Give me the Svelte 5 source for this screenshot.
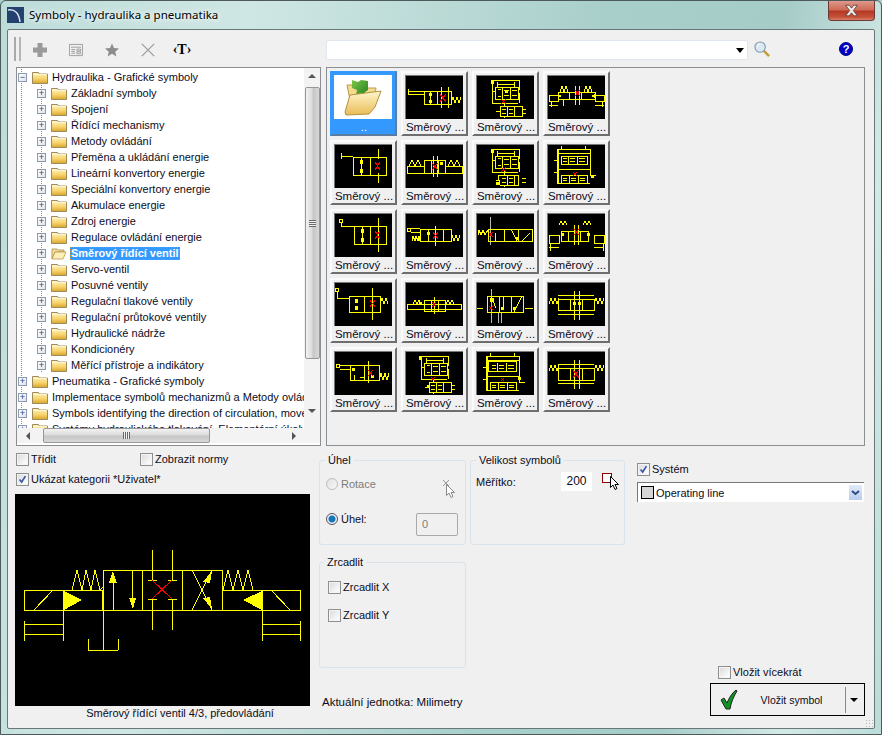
<script>
  const tree = [
    { t: 'Hydraulika - Grafické symboly', l: 0, root: true },
    ...['Základní symboly','Spojení','Řídící mechanismy','Metody ovládání','Přeměna a ukládání energie','Lineární konvertory energie','Speciální konvertory energie','Akumulace energie','Zdroj energie','Regulace ovládání energie'].map((t) => ({ t, l: 1 })),
    { t: 'Směrový řídící ventil', l: 1, sel: true },
    ...['Servo-ventil','Posuvné ventily','Regulační tlakové ventily','Regulační průtokové ventily','Hydraulické nádrže','Kondicionéry','Měřící přístroje a indikátory'].map((t) => ({ t, l: 1 })),
    { t: 'Pneumatika - Grafické symboly', l: 0 },
    { t: 'Implementace symbolů mechanizmů a Metody ovládání', l: 0 },
    { t: 'Symbols identifying the direction of circulation, movement', l: 0 },
    { t: 'Systémy hydraulického tlakování, Elementární úkoly', l: 0 }
  ];

  const block1 = 'M15 5h28M16 5v24M43 5v10M19 12h23v12H19zM26 12v12M34 12v12M16 16h4M16 28h26M43 18v10M21 7v5M38 7v5M22 9h16M24 31h22v10H24zM31 31v10M38 31v10M28 27v4M28 41v2M46 34h4M46 38h4M20 36h4M22 14h3M28 15h5M36 15h5M22 21h3M28 20h5M36 20h5M26 34h4M33 34h4M33 38h4M26 38h4';
  const block2 = 'M10 5h33v4H10zM10 5v34M11 5v34M43 9v22M14 12h26v8H14zM21 12v8M30 12v8M10 25h33M14 31h26v8H14zM22 31v8M31 31v8M10 39h33M43 31h6M7 16h3M7 28h3M16 14h4M23 14h5M32 14h6M16 17h4M23 17h5M32 17h6M16 34h4M24 34h5M33 34h5M16 36h4M24 36h5M33 36h5M14 2v3M38 2v3';
  const thumbs = [
    { y: 'M3 14v5M3 16h16M3 19h16M19 16h27v13H19zM32 16v13M25 16v13M36 12v21M43 12v21M46 28l2-6 2 6 2-6 2 6 2-6', r: 'M35 19l6 8M41 19l-6 8', f: 'M24 18h3v3h-3zM24 25h3v3h-3z' },
    { y: block1, r: 'M25 24l5 5M30 24l-5 5', f: 'M15 5h3v4h-3zM29 15h3v3h-3z' },
    { y: 'M2 20h9v6H2zM48 20h9v6h-9zM11 17h37v7H11zM22 17v7M34 17v7M28 11v19M32 11v19M13 17l2-6 2 6 2-6 2 6M37 17l2-6 2 6 2-6 2 6M16 24v7M4 26v6M55 26v6M2 30h9M48 30h9', r: 'M28 15l5 6M33 15l-5 6', f: 'M11 19l4 2-4 2zM48 19l-4 2 4 2z' },
    { y: 'M7 9v6M7 12h12M19 13h33v18H19zM36 13v18M27 13v18M44 5v10M44 29v10', r: 'M41 18l5 8M46 18l-5 8', f: 'M26 16h3v4h-3zM26 25h3v4h-3z' },
    { y: 'M2 22h17v7H2zM40 22h17v7H40zM19 16h21v13H19zM26 16v13M33 16v13M4 22l3-6 3 6 3-6 3 6M43 22l3-6 3 6 3-6 3 6M28 12v21M32 12v21', r: 'M27 19l6 7M33 19l-6 7', f: 'M35 18h3v3h-3z' },
    { y: block1.replace('M24 31h22', 'M22 31h20'), r: 'M25 23l5 5M30 23l-5 5', f: 'M15 5h3v4h-3zM20 38h3v3h-3z' },
    { y: block2, r: 'M26 28l4 4M30 28l-4 4', f: 'M44 31h3v3h-3z' },
    { y: 'M7 8m-2 0a2 2 0 1 0 4 0a2 2 0 1 0-4 0M7 10v3M7 13h13M20 13h32v18H20zM36 13v18M28 13v18M44 5v34', r: 'M41 18l5 8M46 18l-5 8', f: 'M27 16h3v4h-3zM27 25h3v4h-3z' },
    { y: 'M4 17m-2 0a2 2 0 1 0 4 0a2 2 0 1 0-4 0M6 15h9M6 19h9M15 16h31v12H15zM23 16v12M38 16v12M30 13v20M7 28l1-5 2 5 1-5 2 5 1-5 1 5M46 28l1-6 2 6 2-6 2 6 2-6', r: 'M28 19l5 7M33 19l-5 7', f: 'M22 19h3v3h-3z' },
    { y: 'M2 22l1-5 2 5 2-5 2 5 3-5M12 16h44v12H12zM28 16v12M42 16v12M19 20v8M18 28h4M35 16l6 12M46 28l8-8', r: 'M13 19l4 5M17 19l-4 5', w: 'M14 4v28', f: 'M40 24h3v3h-3z' },
    { y: 'M2 22h10v8H2zM47 22h10v8H47zM14 18h27v10H14zM21 18v10M33 18v10M27 12v20M31 12v20M12 12l2-4 2 4 2-4 2 4M36 12l2-4 2 4 2-4 2 4M3 30v8M56 30v8M2 34h10M47 34h10', r: 'M27 16l5 6M32 16l-5 6', f: 'M14 20h3v3h-3zM40 20h3v3h-3z' },
    { y: 'M3 8m-2 0a2 2 0 1 0 4 0a2 2 0 1 0-4 0M3 10v6M3 16h12M15 14h31v16H15zM30 14v16M38 6v32M46 22l2-6 2 6 2-6 2 6', r: 'M36 18l5 7M41 18l-5 7', f: 'M21 17h3v4h-3zM21 24h3v4h-3z' },
    { y: 'M2 22h54v5H2zM19 18h21v11H19zM26 18v11M33 18v11M29 15v17M8 22l2-4 2 4 2-4 2 4M41 22l2-4 2 4 2-4 2 4', r: 'M27 20l4 5M31 20l-4 5', f: 'M14 20h3v2h-3z' },
    { y: 'M11 14h36v16H11zM23 14v16M35 14v16M1 26h6M49 26h8M15 14l5 12M27 14v12M38 30l8-16', r: 'M13 24l4 4M17 24l-4 4', w: 'M15 7v34M22 30v11M25 30v11', f: 'M14 16h4v4h-4zM25 25h3v3h-3zM37 25h3v3h-3z' },
    { y: 'M2 22l2-6 2 6 2-6 2 6 2-6M47 22l2-6 2 6 2-6 2 6 2-6M11 17h36v11H11zM23 17v11M35 17v11M27 9v29M32 9v29M11 13h36M11 32h36', r: '', f: 'M26 20h3v3h-3zM31 20h3v3h-3z' },
    { y: 'M4 15m-2 0a2 2 0 1 0 4 0a2 2 0 1 0-4 0M6 14h10M6 18h10M16 14h29v15H16zM30 14v15M34 10v22M20 24v5M26 26h5M45 29l2-7 2 7 2-7 2 7 2-7', r: 'M34 19l5 6M39 19l-5 6', f: 'M18 17h3v3h-3zM37 24h3v3h-3z' },
    { y: block1, r: 'M26 26l4 4M30 26l-4 4', f: 'M14 5h3v4h-3zM22 34h3v3h-3z' },
    { y: block2.replace('M14 12h26v8H14z', 'M12 10h28v10H12z'), r: 'M25 27l3 3M28 27l-3 3', f: 'M42 26h3v3h-3z' },
    { y: 'M2 20l2-6 2 6 2-6 2 6 2-6M47 20l2-6 2 6 2-6 2 6 2-6M11 17h36v12H11zM23 17v12M35 17v12M27 9v29M32 9v29M11 13h36M11 32h36', r: 'M26 19l6 8M32 19l-6 8', f: '' }
  ];
  const toolbar = ['plus', 'form', 'star', 'cross'];
</script>

{#snippet folder(open)}
  <svg class="folder" viewBox="0 0 16 13" aria-hidden="true">
    {#if open}
      <path d="M1 12V2h5l1 1h6v2H4z" fill="#f6e2a0" stroke="#a68b44" stroke-width=".8"/>
      <path d="M1 12l3-7h11l-3 7z" fill="#fbeeb8" stroke="#b89a4c" stroke-width=".8"/>
    {:else}
      <path d="M.5 12.500v-11h6l1 1.500h8v9.500z" fill="url(#fold)" stroke="#9b8a5a"/>
      <path d="M1 3.500h14" stroke="#fff7d6"/>
    {/if}
  </svg>
{/snippet}

{#snippet check(on)}
  <span class="check">
    {#if on}
      <svg viewBox="0 0 13 13" aria-hidden="true"><path d="M3 6.500l2.500 3L10 2.500" fill="none" stroke="#3b57a8" stroke-width="2"/></svg>
    {/if}
  </span>
{/snippet}

{#snippet cursor(c)}
  <svg class="cursor" viewBox="0 0 10 14" aria-hidden="true"><path d="M.5.500v11l2.500-2.500 2 4.500 2-1-2-4h3.500z" fill="#fff" stroke={c}/></svg>
{/snippet}

<svg class="defs" aria-hidden="true">
  <defs>
    <linearGradient id="fold" x1="0" y1="0" x2="0" y2="1">
      <stop offset="0" stop-color="#fff3c0"/><stop offset=".55" stop-color="#f7d670"/><stop offset="1" stop-color="#dca32c"/>
    </linearGradient>
    <linearGradient id="bigf" x1="0" y1="0" x2="0" y2="1">
      <stop offset="0" stop-color="#fff6cc"/><stop offset="1" stop-color="#e9bd58"/>
    </linearGradient>
    <linearGradient id="grn" x1="0" y1="0" x2="1" y2="1">
      <stop offset="0" stop-color="#7cc743"/><stop offset="1" stop-color="#1c7a22"/>
    </linearGradient>
  </defs>
</svg>

<div class="window">
  <header class="titlebar">
    <svg class="appicon" viewBox="0 0 17 16" aria-hidden="true">
      <rect width="17" height="16" fill="#23406f"/>
      <path d="M1 3c7-1 11 3 12 12" fill="none" stroke="#d6e2f2" stroke-width="1.500"/>
    </svg>
    <span class="title">Symboly - hydraulika a pneumatika</span>
    <button class="close" aria-label="Zavřít">
      <svg viewBox="0 0 13 11" aria-hidden="true"><path d="M1.500 1h3L6.500 3.500 8.500 1h3L8 5.500l3.500 4.500h-3L6.500 7.500 4.500 10h-3L5 5.500z" fill="#f1eeee" stroke="#5a3b38" stroke-width=".7"/></svg>
    </button>
  </header>

  <main class="dialog">
    <div class="toprow">
      <div class="toolbar">
        <span class="grip"></span>
        {#each toolbar as b}
          <span class="tool">
            {#if b === 'plus'}
              <svg viewBox="0 0 14 14" aria-hidden="true"><path d="M4.500 0h5v4.500H14v5H9.500V14h-5V9.500H0v-5h4.500z" fill="#9a9a9a"/></svg>
            {:else if b === 'form'}
              <svg viewBox="0 0 15 13" aria-hidden="true"><path d="M.5.500h14v12H.5zM2 3.500h11M2.500 6h4M2.500 8h4M2.500 10h4M8.500 5.500h4v2h-4zM8.500 8.500h4v2h-4z" fill="none" stroke="#9c9c9c"/></svg>
            {:else if b === 'star'}
              <svg viewBox="0 0 16 15" aria-hidden="true"><path d="M8 0l2.300 5.300 5.700.5-4.300 3.800 1.300 5.400L8 11.900 3 15l1.300-5.400L0 5.800l5.700-.5z" fill="#8d8d8d"/></svg>
            {:else}
              <svg viewBox="0 0 17 15" aria-hidden="true"><path d="M1 0l15 15M16 0L1 15" stroke="#9c9c9c" stroke-width="1.500"/></svg>
            {/if}
          </span>
        {/each}
        <span class="tool ttext">‹T›</span>
      </div>
      <div class="search">
        <div class="searchbox"><span class="caret"></span></div>
        <svg class="lens" viewBox="0 0 17 17" aria-hidden="true">
          <path d="M10 10l6 6" stroke="#c59a33" stroke-width="2.500"/>
          <circle cx="6.500" cy="6.500" r="5.500" fill="#dce8f2" stroke="#7f9bb3" stroke-width="1.200"/>
          <path d="M3.500 6a3 3 0 0 1 3-3" stroke="#fff" fill="none"/>
        </svg>
        <span class="help">?</span>
      </div>
    </div>

    <div class="midrow">
      <div class="treebox">
        <div class="treeview">
          {#each tree as n}
            <div class="row" class:nested={n.l === 1}>
              <span class="exp">{n.root ? '−' : '+'}</span>
              {@render folder(n.sel)}
              <span class="label" class:sel={n.sel}>{n.t}</span>
            </div>
          {/each}
        </div>
        <div class="vscroll">
          <span class="arrow up"></span>
          <span class="vthumb"><span class="vgrip"></span></span>
          <span class="arrow down"></span>
        </div>
        <div class="hscroll">
          <span class="arrow left"></span>
          <span class="hthumb"><span class="hgrip"></span></span>
          <span class="arrow right"></span>
        </div>
        <div class="corner"></div>
      </div>

      <div class="gallery">
        <div class="cell selected">
          <div class="thumb white">
            <svg viewBox="0 0 58 44" aria-hidden="true">
              <path d="M13 10h14l3 3h12l-2 12H16z" fill="#f3dc8e" stroke="#b99a48"/>
              <path d="M18 5l6 2 3-2 7 1v9l-3 2-1 3-4 4-4-4 1-5-5-2z" fill="url(#grn)"/>
              <path d="M16 20l31-4-6 16-6 7-23 1-1-3z" fill="url(#bigf)" stroke="#b3923f"/>
            </svg>
          </div>
          <span class="cap">..</span>
        </div>
        {#each thumbs as s}
          <div class="cell">
            <div class="thumb">
              <svg viewBox="0 0 58 44" shape-rendering="crispEdges" aria-hidden="true">
                {#if s.w}<path d={s.w} fill="none" stroke="#b8b8b8"/>{/if}
                <path d={s.y} fill="none" stroke="#ffff00"/>
                {#if s.f}<path d={s.f} fill="#ffff00"/>{/if}
                {#if s.r}<path d={s.r} fill="none" stroke="#ff0000"/>{/if}
              </svg>
            </div>
            <span class="cap">Směrový ...</span>
          </div>
        {/each}
      </div>
    </div>

    <div class="bottomrow">
      <div class="leftcol">
        <div class="checks">
          <label class="opt sort">{@render check(false)}Třídit</label>
          <label class="opt">{@render check(false)}Zobrazit normy</label>
        </div>
        <label class="opt cat">{@render check(true)}Ukázat kategorii *Uživatel*</label>
        <svg class="preview" viewBox="0 0 295 212" shape-rendering="crispEdges" aria-hidden="true">
          <path fill="none" stroke="#ffff00" d="M9.500 96.500h78v20h-78zM48.500 96.500v50M9.500 126.500v20M9.500 130.500h39M9.500 140.500h39M19 116l19-20
            M88.500 76.500h119v40h-119zM127.500 76.500v40M167.500 76.500v40M98.500 89v27M117.500 76v28
            M207.500 96.500h78v20h-78zM247.500 96.500v50M285.500 126.500v20M247.500 130.500h38M247.500 140.500h38M256 96l19 20
            M57 96l5-20 5 20 4-20 5 20 4-20 5 20 3-3
            M208 96l5-20 5 20 5-20 5 20 5-20 5 20
            M137.500 56v30M137.500 105v31M157.500 56v30M157.500 105v31M133 86.500h9M153 86.500h9M133 105.500h9M153 105.500h9
            M177 76l20 40M177 116l20-40
            M88.500 116v40M73 156.500h30M73.500 145v11M103.500 145v11"/>
          <path fill="#ffff00" d="M49 97l18 9-18 10zM247 97l-19 9 19 10zM94 89h8l-4-12zM114 104h7l-3 11zM188 88l9-11-2 12zM188 104l9 11-2-12z"/>
          <path fill="none" stroke="#ff0000" d="M137 86l20 19M157 86l-20 19"/>
        </svg>
        <div class="caption">Směrový řídící ventil 4/3, předovládání</div>
      </div>

      <div class="midcol">
        <div class="groups">
          <div class="stack">
            <fieldset class="uhel">
              <legend>Úhel</legend>
              <div class="radrow disabled">
                <span class="radio"></span>Rotace
                <span class="picker dim">
                  <svg viewBox="0 0 6 6" class="tick" aria-hidden="true"><path d="M0 0l6 6M6 0L0 6" stroke="#9a9a9a"/></svg>
                  {@render cursor('#8a8a8a')}
                </span>
              </div>
              <div class="radrow angle">
                <span class="radio on"></span>Úhel:
                <span class="numfield">0</span>
              </div>
            </fieldset>
            <fieldset class="mirror">
              <legend>Zrcadlit</legend>
              <label class="opt">{@render check(false)}Zrcadlit X</label>
              <label class="opt">{@render check(false)}Zrcadlit Y</label>
            </fieldset>
          </div>
          <fieldset class="size">
            <legend>Velikost symbolů</legend>
            <div class="scale">
              <span class="scalelabel">Měřítko:</span>
              <span class="scalefield">200</span>
              <span class="picker">
                <span class="redbox"></span>
                {@render cursor('#000')}
              </span>
            </div>
          </fieldset>
        </div>
        <div class="unit">Aktuální jednotka: Milimetry</div>
      </div>

      <div class="rightcol">
        <div>
          <label class="opt system">{@render check(true)}Systém</label>
          <div class="combo">
            <span class="swatch"></span>
            <span class="combotext">Operating line</span>
            <span class="dropbtn">
              <svg viewBox="0 0 9 6" aria-hidden="true"><path d="M1 1l3.500 3L8 1" fill="none" stroke="#2f4a80" stroke-width="2"/></svg>
            </span>
          </div>
        </div>
        <div class="insert">
          <label class="opt multi">{@render check(false)}Vložit vícekrát</label>
          <div class="insertbtn">
            <svg class="tick-green" viewBox="0 0 18 21" aria-hidden="true">
              <path d="M1 11l3-2 3 5c2-5 5-10 9-13l1 1c-3 5-6 11-7 18H6z" fill="#0d9423" stroke="#222" stroke-width="1"/>
            </svg>
            <span class="btntext">Vložit symbol</span>
            <span class="sep"></span>
            <span class="btncaret"></span>
          </div>
          <div class="sizegrip"></div>
        </div>
      </div>
    </div>
  </main>
</div>

<style>
  :global(body) { margin: 0; background: #a9cfcb; }
  .defs { display: block; width: 0; height: 0; }
  .window {
    width: 882px; height: 735px; box-sizing: border-box; overflow: hidden;
    display: flex; flex-direction: column;
    border: 1px solid #4c5a5c; border-radius: 6px 6px 0 0;
    background: linear-gradient(100deg, #bcdcd9 0%, #cfe7e4 25%, #a9cfcb 60%, #a6ccc8 78%, #d3e9e6 90%, #bcdcd9 100%);
    font: 11px "Liberation Sans", Arial, sans-serif; color: #0c0c1c;
  }
  .titlebar { height: 28px; flex: none; display: flex; align-items: flex-start; padding-left: 6px; }
  .appicon { width: 17px; height: 16px; margin-top: 6px; }
  .title { margin: 6px 0 0 5px; font: 11.500px/16px "Noto Sans", sans-serif; color: #000; text-shadow: 0 0 8px #fff, 0 0 4px #fff; }
  .close {
    margin-left: auto; margin-right: 6px; width: 47px; height: 20px; padding: 0;
    border: 1px solid #6b3a35; border-top: 0; border-radius: 0 0 4px 4px;
    background: linear-gradient(#dd9a8c 0%, #cf6b58 45%, #b43a23 55%, #c9513a 85%, #d9806b 100%);
    display: flex; align-items: center; justify-content: center;
  }
  .close svg { width: 17px; height: 13px; }
  .dialog {
    flex: 1; min-height: 0; margin: 0 6px 5px 6px; box-sizing: border-box;
    border: 1px solid #687778; background: #f0f0f0;
    display: flex; flex-direction: column; padding: 8px 9px 0 8px;
    border-radius: 2px;
  }
  .toprow { display: flex; height: 29px; flex: none; }
  .toolbar { width: 310px; margin: -1px 0 0 -2px; display: flex; align-items: center; height: 24px; }
  .grip { width: 3px; height: 24px; border-left: 2px solid #a9a9a9; border-right: 2px solid #b5b5b5; margin-right: 1px; }
  .tool { width: 36px; height: 24px; margin-top: 2px; display: flex; align-items: center; justify-content: center; }
  .tool svg { width: 14px; height: 14px; }
  .ttext { font: bold 14px "Liberation Serif", serif; color: #000; margin-left: -2px; }
  .search { flex: 1; display: flex; align-items: flex-start; margin-left: 2px; }
  .searchbox {
    width: 422px; height: 20px; margin-top: 2px; box-sizing: border-box; background: #fff;
    border: 1px solid #dfe6ee; border-radius: 2px; display: flex; align-items: center; justify-content: flex-end; padding-right: 3px;
  }
  .caret { border: 4px solid transparent; border-top: 5px solid #000; border-bottom: 0; }
  .lens { width: 16px; height: 16px; margin: 3px 0 0 6px; }
  .help {
    width: 14px; height: 14px; margin: 4px 0 0 69px; border-radius: 50%; background: #0000c8;
    border: 1px solid #000a80; box-sizing: border-box; color: #fff; font: bold 11px/12px "Liberation Sans", sans-serif; text-align: center;
  }

  .midrow { display: flex; gap: 5px; height: 379px; flex: none; }
  .treebox {
    width: 305px; box-sizing: border-box; background: #fff; border: 1px solid #8b8f92;
    display: grid; grid-template-columns: 287px 16px; grid-template-rows: 360px 15px;
  }
  .treeview { overflow: hidden; padding-top: 1px; }
  .row {
    height: 16px; display: flex; align-items: center; white-space: nowrap; padding-left: 1px;
    background: repeating-linear-gradient(to bottom, #8a8a8a 0 1px, transparent 1px 2px) 4px 0 / 1px 100% no-repeat;
  }
  .row.nested {
    padding-left: 20px;
    background:
      repeating-linear-gradient(to bottom, #8a8a8a 0 1px, transparent 1px 2px) 4px 0 / 1px 100% no-repeat,
      repeating-linear-gradient(to bottom, #8a8a8a 0 1px, transparent 1px 2px) 24px 0 / 1px 100% no-repeat;
  }
  .exp {
    width: 9px; height: 9px; box-sizing: border-box; flex: none; border: 1px solid #8d9aad;
    background: linear-gradient(135deg, #fff, #dfe4ec); color: #1c3f7a; font: 9px/7px "Liberation Sans", sans-serif;
    text-align: center; margin-right: 5px; position: relative; z-index: 1;
  }
  .folder { width: 16px; height: 13px; flex: none; margin-right: 3px; }
  .label { padding: 0 1px; line-height: 13px; }
  .label.sel { background: #3399ff; color: #fff; font-weight: 700; outline: 1px dotted #c58a2a; outline-offset: -1px; }
  .vscroll { background: #f3f3f3; display: flex; flex-direction: column; align-items: center; }
  .vthumb {
    width: 15px; height: 272px; margin-top: 9px; box-sizing: border-box; border: 1px solid #979797; border-radius: 2px;
    background: linear-gradient(90deg, #f2f2f2, #dcdcdc 45%, #c6c6c6 55%, #d8d8d8);
    display: flex; align-items: center; justify-content: center;
  }
  .vgrip { width: 7px; height: 7px; background: repeating-linear-gradient(to bottom, #6a6a6a 0 1px, #eee 1px 2px); }
  .hscroll { background: #f3f3f3; display: flex; align-items: center; padding-left: 3px; }
  .hthumb {
    width: 167px; height: 15px; margin-left: 13px; box-sizing: border-box; border: 1px solid #979797; border-radius: 2px;
    background: linear-gradient(#f2f2f2, #dcdcdc 45%, #c6c6c6 55%, #d8d8d8);
    display: flex; align-items: center; justify-content: center;
  }
  .hgrip { width: 7px; height: 7px; background: repeating-linear-gradient(to right, #6a6a6a 0 1px, #eee 1px 2px); }
  .corner { background: #f3f3f3; }
  .arrow { display: block; width: 0; height: 0; border: 4px solid transparent; }
  .up { border-top: 0; border-bottom: 4px solid #555; margin-top: 6px; }
  .down { border-bottom: 0; border-top: 4px solid #555; margin-top: 50px; }
  .left { border-left: 0; border-right: 4px solid #555; margin-left: 6px; }
  .right { border-right: 0; border-left: 4px solid #555; margin-left: 82px; }

  .gallery {
    width: 539px; box-sizing: border-box; border: 1px solid #8b8f92; padding: 3px;
    display: grid; grid-template-columns: repeat(4, 67px); grid-auto-rows: 65px; gap: 4px; align-content: start;
  }
  .cell {
    box-sizing: border-box; border: 2px solid; border-color: #fbfbfb #6e6e6e #6e6e6e #fbfbfb; padding: 2px 0 0 2px; background: #f0f0f0;
    display: flex; flex-direction: column; overflow: hidden; width: 67px;
  }
  .cell.selected { background: #3399ff; border-color: #3399ff #5a7ca0 #5a7ca0 #3399ff; }
  .thumb { width: 58px; height: 44px; box-sizing: border-box; background: #000; border-top: 1px solid #777; border-left: 1px solid #777; flex: none; }
  .thumb.white { background: #fff; border-color: #fff; }
  .thumb svg { display: block; width: 58px; height: 44px; margin: -1px 0 0 -1px; }
  .cap { font-size: 11.500px; line-height: 15px; margin-top: 1px; text-align: center; white-space: nowrap; width: 60px; }
  .selected .cap { color: #fff; }

  .bottomrow { flex: 1; min-height: 0; display: flex; }
  .opt { display: flex; align-items: center; height: 16px; white-space: nowrap; }
  .check {
    width: 13px; height: 13px; box-sizing: border-box; border: 1px solid #8e8f8f; flex: none; margin-right: 2px;
    background: linear-gradient(135deg, #d9d9d9, #f6f6f6 70%, #fff);
    box-shadow: inset 0 0 0 1px #f4f4f4;
  }
  .check svg { display: block; width: 11px; height: 11px; }
  .leftcol { width: 304px; margin-left: -1px; flex: none; }
  .checks { display: flex; margin: 5px 0 0 1px; }
  .sort { width: 124px; }
  .cat { margin: 4px 0 7px 1px; }
  .preview { display: block; width: 295px; height: 212px; background: #000; }
  .caption { text-align: center; width: 330px; line-height: 14px; }

  .midcol { width: 317px; flex: none; }
  .groups { display: flex; gap: 4px; margin-top: 7px; }
  .stack { display: flex; flex-direction: column; gap: 10px; }
  fieldset { margin: 0; box-sizing: border-box; border: 1px solid #dbe3ea; border-radius: 3px; padding: 0 0 0 7px; min-width: 0; }
  legend { padding: 0 3px; margin-left: -1px; line-height: 14px; }
  .uhel { width: 147px; height: 92px; padding-left: 6px; }
  .mirror { width: 147px; height: 113px; padding-left: 8px; }
  .mirror legend { margin-left: -4px; }
  .mirror .opt { height: 16px; margin-top: 10px; margin-bottom: 12px; }
  .mirror .opt + .opt { margin-top: 0; }
  .size { width: 155px; height: 92px; padding-left: 5px; }
  .size legend { margin-left: 0; }
  .radrow { display: flex; align-items: center; height: 22px; gap: 3px; margin-top: 6px; }
  .radrow.disabled { color: #7c7c7c; }
  .radrow.angle { margin-top: 13px; }
  .radio { width: 12px; height: 12px; border-radius: 50%; box-sizing: border-box; border: 1px solid #bdbdbd; background: linear-gradient(135deg, #e2e2e2, #f8f8f8); }
  .radio.on { background: radial-gradient(circle, #1677b8 0 3px, #eef 4px); border-color: #555; }
  .numfield {
    width: 42px; height: 23px; box-sizing: border-box; margin: 5px 7px 0 auto; align-self: flex-start; border: 1px solid #a9a9a9; border-radius: 2px;
    color: #7c7c7c; line-height: 21px; padding-left: 5px; flex: none;
  }
  .picker { display: flex; width: 19px; height: 18px; }
  .picker.dim { margin: 7px 3px 0 auto; align-self: flex-start; }
  .picker.dim .tick { width: 6px; height: 6px; flex: none; }
  .cursor { width: 10px; height: 14px; flex: none; }
  .picker.dim .cursor { margin: 4px 0 0 -3px; }
  .scale { display: flex; align-items: center; height: 19px; margin-top: 5px; }
  .scalelabel { width: 85px; flex: none; }
  .scalefield { width: 31px; height: 19px; background: #fff; text-align: center; line-height: 19px; font-size: 12px; flex: none; }
  .scale .picker { margin: 0 0 0 10px; height: 19px; width: 19px; flex: none; }
  .redbox { width: 10px; height: 10px; box-sizing: border-box; border: 1px solid #8b0000; background: #fff; flex: none; margin-top: 1px; }
  .scale .cursor { margin: 4px 0 0 -2px; }
  .unit { margin-top: 26px; margin-left: 3px; line-height: 16px; font-size: 11.500px; }

  .rightcol { flex: 1; display: flex; flex-direction: column; justify-content: space-between; margin: 0 -9px 0 1px; }
  .system { margin-top: 15px; }
  .combo {
    display: flex; align-items: center; width: 227px; height: 20px; box-sizing: border-box; margin-top: 5px; background: #fff;
    border-top: 1px solid #787878; border-left: 1px solid #787878; padding-left: 3px;
  }
  .swatch { width: 13px; height: 13px; box-sizing: border-box; border: 1px solid #000; background: #d6d6d6; margin-right: 2px; }
  .dropbtn {
    margin-left: auto; margin-right: 2px; width: 13px; height: 15px; background: linear-gradient(#e2ebf8, #b9cdf0);
    display: flex; align-items: center; justify-content: center;
  }
  .dropbtn svg { width: 9px; height: 6px; }
  .insert { display: flex; flex-direction: column; }
  .multi { margin: 0 0 3px 81px; }
  .insertbtn {
    width: 155px; height: 33px; box-sizing: border-box; margin-left: 73px; border: 1px solid #000; display: flex; align-items: center; background: #f0f0f0;
  }
  .tick-green { width: 18px; height: 21px; margin-left: 9px; }
  .btntext { width: 107px; text-align: center; font-size: 10.500px; }
  .sep { width: 1px; height: 26px; background: #8a8a8a; }
  .btncaret { border: 4px solid transparent; border-top: 4px solid #000; border-bottom: 0; margin-left: 4px; }
  .sizegrip {
    width: 8px; height: 8px; align-self: flex-end; margin: 3px 1px 1px 0;
    background: radial-gradient(circle, #b8b8b8 0 1px, transparent 1px) 0 0 / 3px 3px;
  }
</style>
